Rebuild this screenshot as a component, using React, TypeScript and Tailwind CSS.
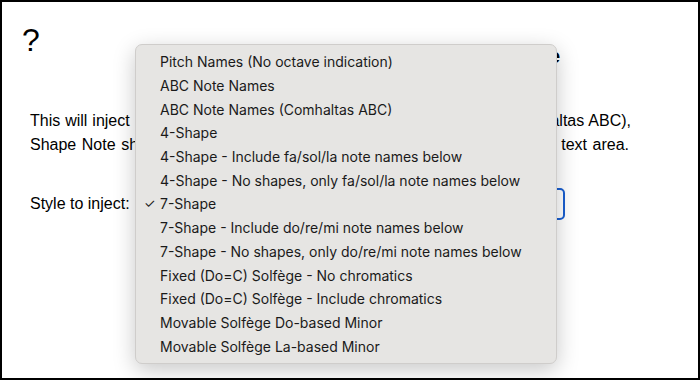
import React from 'react';

const styles = [
  'Pitch Names (No octave indication)',
  'ABC Note Names',
  'ABC Note Names (Comhaltas ABC)',
  '4-Shape',
  '4-Shape - Include fa/sol/la note names below',
  '4-Shape - No shapes, only fa/sol/la note names below',
  '7-Shape',
  '7-Shape - Include do/re/mi note names below',
  '7-Shape - No shapes, only do/re/mi note names below',
  'Fixed (Do=C) Solfège - No chromatics',
  'Fixed (Do=C) Solfège - Include chromatics',
  'Movable Solfège Do-based Minor',
  'Movable Solfège La-based Minor',
];

const selected = '7-Shape';

export default function App() {
  return (
    <div className="relative w-[700px] h-[380px] overflow-hidden border-2 border-black bg-white font-['Liberation_Sans',Arial,sans-serif] text-black">
      <div className="flex items-start pl-[20px] pt-[20px]">
        <span className="text-[32px] leading-[36px]">?</span>
        <h1 className="ml-[134px] mt-[21px] text-[21px] font-bold leading-[26px]">Inject Note Names or Shape Note Style</h1>
      </div>

      <div className="px-[28px] pt-[40px] text-[16px] leading-[24px]">
        <p>
          <span className="block w-[601px] [text-align-last:justify]">
            This will inject Pitch Names, ABC Note Names, ABC Note Names (Comhaltas ABC),
          </span>
          <span className="block w-[599px] [text-align-last:justify]">
            Shape Note shapes, or Solfège note names into all the tunes in the ABC text area.
          </span>
        </p>
        <div className="mt-[31px] flex items-center gap-[6px]">
          <span>Style to inject:</span>
          <div className="h-[32px] w-[429px] rounded-[5px] border-2 border-[#1a5fd0] bg-white" />
        </div>
      </div>

      <div className="absolute left-[133px] top-[42px] w-[422px] rounded-[7px] border border-[#cfcdcb] bg-[#e6e5e3] py-[5px] shadow-[0_6px_22px_rgba(0,0,0,0.22)] font-['Inter','Liberation_Sans',sans-serif] text-[14px] text-[#1a1a1a]">
        {styles.map((s) => (
          <div key={s} className="flex h-[23.7px] items-center">
            <span className="w-[24px] pl-[8px] text-[13px]">{s === selected ? '✓' : ''}</span>
            <span>{s}</span>
          </div>
        ))}
      </div>
    </div>
  );
}
